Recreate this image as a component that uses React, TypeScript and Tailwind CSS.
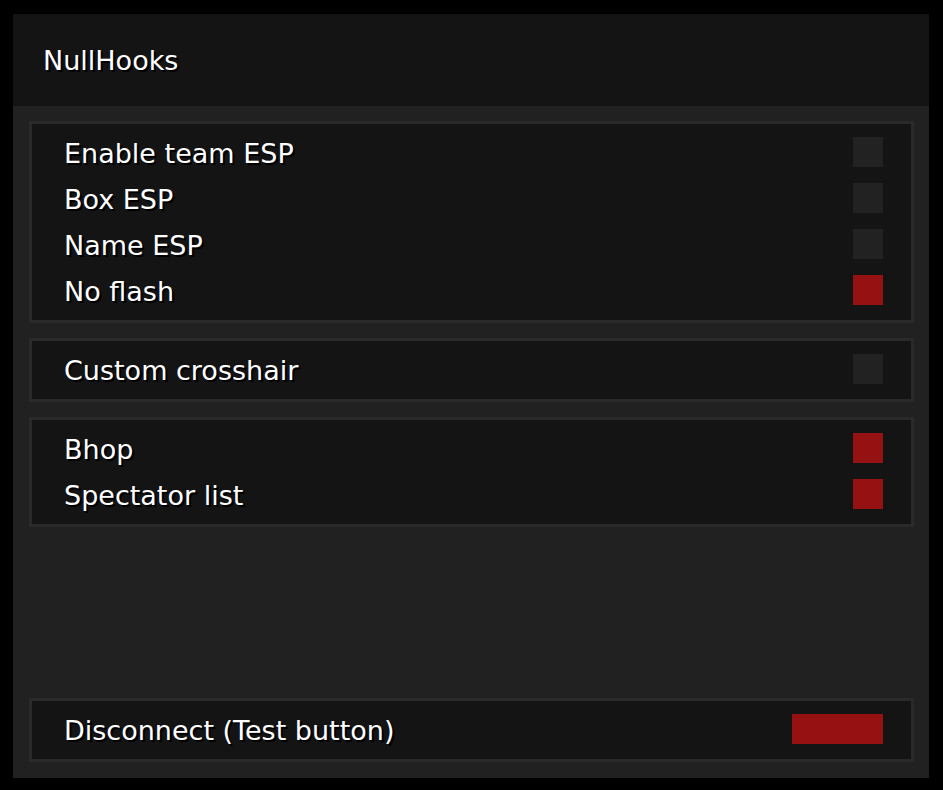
import React from 'react';

type Opt = { label: string; on: boolean };

const groups: Opt[][] = [
  [
    { label: 'Enable team ESP', on: false },
    { label: 'Box ESP', on: false },
    { label: 'Name ESP', on: false },
    { label: 'No flash', on: true },
  ],
  [{ label: 'Custom crosshair', on: false }],
  [
    { label: 'Bhop', on: true },
    { label: 'Spectator list', on: true },
  ],
];

const textCls =
  "text-white text-[27px] leading-none [font-family:'DejaVu_Sans',sans-serif] [text-shadow:2px_2px_0_#000]";

function Row({ label, on }: Opt) {
  return (
    <div className="flex h-[31px] items-center justify-between">
      <span className={`${textCls} pt-[4px]`}>{label}</span>
      <div className={`h-[30px] w-[30px] ${on ? 'bg-[#961111]' : 'bg-[#222222]'}`} />
    </div>
  );
}

export default function App() {
  return (
    <div className="h-[790px] w-[943px] bg-black pl-[13px] pt-[14px]">
      <div className="flex h-[764px] w-[916px] flex-col">
        {/* title bar */}
        <div className="flex h-[92px] items-center bg-[#141414] pl-[30px]">
          <span className={textCls}>NullHooks</span>
        </div>

        <div className="flex flex-1 flex-col gap-[15px] bg-[#212121] pb-[16px] pl-[16px] pr-[15px] pt-[15px]">
          {groups.map((g, i) => (
            <div
              key={i}
              className="flex flex-col gap-[15px] border-[3px] border-[#2a2a2a] bg-[#141414] pb-[15px] pl-[32px] pr-[28px] pt-[12px]"
            >
              {g.map((o) => (
                <Row key={o.label} {...o} />
              ))}
            </div>
          ))}

          <div className="mt-auto border-[3px] border-[#2a2a2a] bg-[#141414] pb-[15px] pl-[32px] pr-[28px] pt-[12px]">
            <div className="flex h-[31px] items-center justify-between">
              <span className={`${textCls} pt-[4px]`}>Disconnect (Test button)</span>
              <button className="h-[30px] w-[91px] bg-[#961111]" />
            </div>
          </div>
        </div>
      </div>
    </div>
  );
}
